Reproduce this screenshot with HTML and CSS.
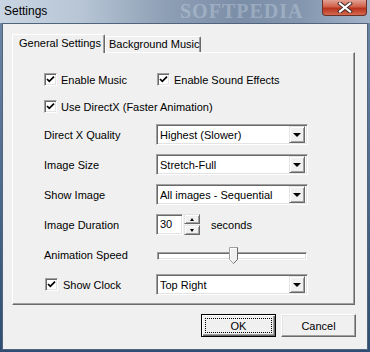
FILE: index.html
```html
<html lang="en">
  <head>
    <meta charset="UTF-8" />
    <title>Settings</title>
    <link rel="stylesheet" href="styles.css">
  </head>
  <body>
    <div class="window">
      <div class="titlebar">
        <span class="title">Settings</span>
        <span class="watermark">SOFTPEDIA</span>
        <div class="close">
          <svg width="16" height="11" viewBox="0 0 16 11">
            <path d="M3 1.5 L13 9.5 M13 1.5 L3 9.5" stroke="#3b2a2a" stroke-width="4" stroke-linecap="square" />
            <path d="M3 1.5 L13 9.5 M13 1.5 L3 9.5" stroke="#fff" stroke-width="2.2" stroke-linecap="square" />
          </svg>
        </div>
      </div>
      <div class="frame">
        <div class="client">
          <div class="tabs">
            <div class="tab-strip">
              <div class="tab active">General Settings</div>
              <div class="tab">Background Music</div>
            </div>
            <div class="panel">
              <div class="row row-first">
                <label class="check-item label-col">
                  <span class="check"><svg width="9" height="9" viewBox="0 0 9 9"><path d="M1 4 L3.3 6.4 L8 1.6" stroke="#000" stroke-width="1.7" fill="none" /></svg></span>
                  Enable Music
                </label>
                <label class="check-item second">
                  <span class="check"><svg width="9" height="9" viewBox="0 0 9 9"><path d="M1 4 L3.3 6.4 L8 1.6" stroke="#000" stroke-width="1.7" fill="none" /></svg></span>
                  Enable Sound Effects
                </label>
              </div>
              <div class="row row-second">
                <label class="check-item">
                  <span class="check"><svg width="9" height="9" viewBox="0 0 9 9"><path d="M1 4 L3.3 6.4 L8 1.6" stroke="#000" stroke-width="1.7" fill="none" /></svg></span>
                  Use DirectX (Faster Animation)
                </label>
              </div>
              <div class="row row-third">
                <span class="label-col">Direct X Quality</span>
                <div class="select"><span class="value">Highest (Slower)</span><span class="arrow"></span></div>
              </div>
              <div class="row">
                <span class="label-col">Image Size</span>
                <div class="select"><span class="value">Stretch-Full</span><span class="arrow"></span></div>
              </div>
              <div class="row">
                <span class="label-col">Show Image</span>
                <div class="select"><span class="value">All images - Sequential</span><span class="arrow"></span></div>
              </div>
              <div class="row">
                <span class="label-col">Image Duration</span>
                <div class="spinner">
                  <span class="edit">30</span>
                  <span class="updown">
                    <span class="ud-btn"><span class="tri-up"></span></span>
                    <span class="ud-btn"><span class="tri-down"></span></span>
                  </span>
                </div>
                <span class="unit">seconds</span>
              </div>
              <div class="row">
                <span class="label-col">Animation Speed</span>
                <div class="slider">
                  <span class="track"></span>
                  <svg class="thumb" width="9" height="17" viewBox="0 0 9 17">
                    <path d="M0.5 0.5 H8.5 V12.5 L4.5 16.5 L0.5 12.5 Z" fill="#f0f0f0" stroke="#a0a0a0" />
                    <path d="M1.5 12 V1.5 H7.5" stroke="#fff" fill="none" />
                    <path d="M8.5 0.5 V12.5 L4.5 16.5" stroke="#696969" fill="none" />
                  </svg>
                </div>
              </div>
              <div class="row">
                <label class="check-item label-col clock">
                  <span class="check"><svg width="9" height="9" viewBox="0 0 9 9"><path d="M1 4 L3.3 6.4 L8 1.6" stroke="#000" stroke-width="1.7" fill="none" /></svg></span>
                  Show Clock
                </label>
                <div class="select"><span class="value">Top Right</span><span class="arrow"></span></div>
              </div>
            </div>
          </div>
          <div class="buttons">
            <button class="btn default"><span class="focus">OK</span></button>
            <button class="btn">Cancel</button>
          </div>
        </div>
      </div>
    </div>
  </body>
</html>
```

FILE: styles.css
```css
body {
  margin: 0;
  font-family: "Liberation Sans", Arial, sans-serif;
  font-size: 11px;
  color: #000;
}

.window {
  width: 370px;
  height: 352px;
  display: flex;
  flex-direction: column;
  background: linear-gradient(#6f89a8, #2f4d72);
}

.titlebar {
  position: relative;
  height: 23px;
  background: linear-gradient(to right, #c9d5e2 0%, #b7c5d5 22%, #8d9fb5 45%, #7b8ea7 65%, #8497af 82%, #a3b4c8 100%);
}

.title {
  position: absolute;
  left: 4px;
  top: 4px;
  font-size: 12px;
}

.watermark {
  position: absolute;
  left: 180px;
  top: 1px;
  font-family: "Liberation Serif", serif;
  font-size: 20px;
  line-height: 20px;
  font-weight: bold;
  color: rgba(230, 238, 248, 0.3);
  letter-spacing: 1px;
}

.close {
  position: absolute;
  right: 3px;
  top: 0;
  width: 45px;
  height: 16px;
  box-sizing: border-box;
  border: 1px solid #6b3128;
  border-top: none;
  border-radius: 0 0 4px 4px;
  background: linear-gradient(#e2a092, #d0604a 45%, #b8321c 55%, #d46a50);
  display: flex;
  align-items: center;
  justify-content: center;
}

.frame {
  flex: 1;
  display: flex;
  padding: 0 2px 2px 2px;
}

.client {
  flex: 1;
  border: 1px solid #50647d;
  background: #f0f0f0;
  display: flex;
  flex-direction: column;
}

.tabs {
  margin: 10px 0 0 9px;
  width: 343px;
}

.tab-strip {
  display: flex;
  align-items: flex-end;
  height: 18px;
}

.tab {
  box-sizing: border-box;
  width: 96px;
  height: 16px;
  padding-left: 3px;
  line-height: 15px;
  border-top: 1px solid #fff;
  border-left: 1px solid #fff;
  border-right: 1px solid #696969;
  box-shadow: inset -1px 0 #a0a0a0;
  border-radius: 2px 2px 0 0;
}

.tab.active {
  position: relative;
  z-index: 1;
  width: 93px;
  height: 19px;
  margin-bottom: -1px;
  padding-left: 6px;
  line-height: 17px;
  background: #f0f0f0;
}

.panel {
  box-sizing: border-box;
  height: 253px;
  padding: 16px 0 0 31px;
  border-top: 1px solid #fff;
  border-left: 1px solid #fff;
  border-right: 1px solid #696969;
  border-bottom: 1px solid #696969;
  box-shadow: inset -1px -1px #a0a0a0;
}

.row {
  display: flex;
  align-items: center;
  height: 21px;
  margin-top: 9px;
}

.row-first {
  margin-top: 0;
}

.row-second {
  margin-top: 6px;
}

.row-third {
  margin-top: 7px;
}

.label-col {
  width: 112px;
  flex-shrink: 0;
}

.check-item {
  display: flex;
  align-items: center;
  gap: 4px;
}

.check-item.second {
  margin-left: 1px;
}

.check-item.clock {
  gap: 5px;
  padding-left: 1px;
  width: 111px;
}

.check {
  box-sizing: border-box;
  width: 13px;
  height: 13px;
  background: #fff;
  border: 1px solid;
  border-color: #a0a0a0 #fff #fff #a0a0a0;
  box-shadow: inset 1px 1px #696969, inset -1px -1px #e3e3e3;
  display: flex;
  align-items: center;
  justify-content: center;
}

.select {
  position: relative;
  box-sizing: border-box;
  width: 152px;
  height: 21px;
  background: #fff;
  border: 1px solid;
  border-color: #a0a0a0 #fff #fff #a0a0a0;
  box-shadow: inset 1px 1px #696969, inset -1px -1px #e3e3e3;
  display: flex;
  align-items: center;
  padding: 0 2px;
}

.value {
  flex: 1;
  padding-left: 1px;
}

.arrow {
  box-sizing: border-box;
  width: 16px;
  height: 17px;
  background: #f0f0f0;
  border: 1px solid;
  border-color: #e3e3e3 #696969 #696969 #e3e3e3;
  box-shadow: inset 1px 1px #fff, inset -1px -1px #a0a0a0;
  display: flex;
  align-items: center;
  justify-content: center;
}

.arrow::after {
  content: "";
  border-left: 4px solid transparent;
  border-right: 4px solid transparent;
  border-top: 4px solid #000;
}

.spinner {
  display: flex;
  height: 21px;
}

.edit {
  box-sizing: border-box;
  width: 27px;
  height: 21px;
  padding: 0 3px;
  line-height: 19px;
  background: #fff;
  border: 1px solid;
  border-color: #a0a0a0 #fff #fff #a0a0a0;
  box-shadow: inset 1px 1px #696969, inset -1px -1px #e3e3e3;
}

.updown {
  display: flex;
  flex-direction: column;
  width: 16px;
  margin-left: 1px;
}

.ud-btn {
  box-sizing: border-box;
  height: 10px;
  background: #f0f0f0;
  border: 1px solid;
  border-color: #e3e3e3 #696969 #696969 #e3e3e3;
  box-shadow: inset 1px 1px #fff, inset -1px -1px #a0a0a0;
  display: flex;
  align-items: center;
  justify-content: center;
}

.ud-btn + .ud-btn {
  margin-top: 1px;
}

.tri-up {
  border-left: 2.5px solid transparent;
  border-right: 2.5px solid transparent;
  border-bottom: 3px solid #000;
}

.tri-down {
  border-left: 2.5px solid transparent;
  border-right: 2.5px solid transparent;
  border-top: 3px solid #000;
}

.unit {
  margin-left: 11px;
}

.slider {
  position: relative;
  margin-left: 1px;
  width: 150px;
  height: 21px;
  display: flex;
  align-items: center;
}

.track {
  box-sizing: border-box;
  width: 150px;
  height: 8px;
  margin-top: 2px;
  background: #fff;
  border: 1px solid;
  border-color: #a0a0a0 #fff #fff #a0a0a0;
  box-shadow: inset 1px 1px #696969, inset -1px -1px #e3e3e3;
}

.thumb {
  position: absolute;
  left: 72px;
  top: 3px;
}

.buttons {
  display: flex;
  justify-content: flex-end;
  gap: 5px;
  margin-top: 9px;
  padding-right: 11px;
}

.btn {
  box-sizing: border-box;
  width: 75px;
  height: 23px;
  padding: 0;
  font-family: "Liberation Sans", Arial, sans-serif;
  font-size: 11px;
  color: #000;
  background: #f0f0f0;
  border: 1px solid;
  border-color: #fff #696969 #696969 #fff;
  box-shadow: inset -1px -1px #a0a0a0, inset 1px 1px #e3e3e3;
}

.btn.default {
  border: 1px solid #000;
  box-shadow: inset 1px 1px #fff, inset -1px -1px #696969, inset -2px -2px #a0a0a0;
  display: flex;
  padding: 3px;
}

.focus {
  flex: 1;
  border: 1px dotted #000;
  display: flex;
  align-items: center;
  justify-content: center;
}
```
